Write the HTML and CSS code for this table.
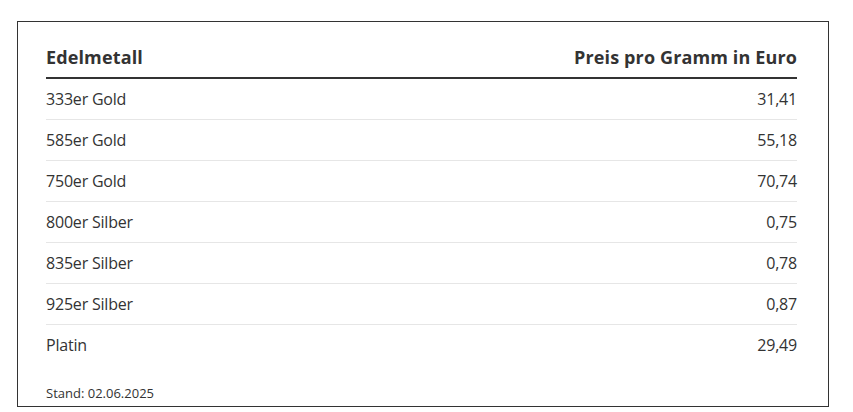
FILE: index.html
```html
<!DOCTYPE html>
<html lang="de">
<head>
<meta charset="utf-8">
<link rel="stylesheet" href="styles.css">
</head>
<body>
<div class="card">
  <table class="prices">
    <thead>
      <tr><th class="name">Edelmetall</th><th class="val">Preis pro Gramm in Euro</th></tr>
    </thead>
    <tbody>
      <tr><td class="name">333er Gold</td><td class="val">31,41</td></tr>
      <tr><td class="name">585er Gold</td><td class="val">55,18</td></tr>
      <tr><td class="name">750er Gold</td><td class="val">70,74</td></tr>
      <tr><td class="name">800er Silber</td><td class="val">0,75</td></tr>
      <tr><td class="name">835er Silber</td><td class="val">0,78</td></tr>
      <tr><td class="name">925er Silber</td><td class="val">0,87</td></tr>
      <tr><td class="name">Platin</td><td class="val">29,49</td></tr>
    </tbody>
  </table>
  <p class="stand">Stand: 02.06.2025</p>
</div>
</body>
</html>
```
FILE: styles.css
```css
html, body { margin: 0; padding: 0; background: #fff; }
body {
  font-family: "Open Sans", "Noto Sans", sans-serif;
  color: #333;
  padding: 21px 24px 0 17px;
}
.card {
  border: 1px solid #333;
  padding: 22px 31px 10px 28px;
  height: 352px;
}
.prices {
  width: 100%;
  border-collapse: collapse;
}
.prices th {
  font-size: 18px;
  font-weight: 700;
  letter-spacing: 0.13px;
  padding: 0 0 7px;
  border-bottom: 2px solid #333;
  line-height: 26px;
}
.prices td {
  font-size: 16px;
  letter-spacing: -0.2px;
  height: 40px;
  padding: 0;
  border-bottom: 1px solid #e6e6e6;
  line-height: 20px;
}
.prices tbody tr:last-child td { border-bottom: none; }
.name { text-align: left; }
.val { text-align: right; }
.stand {
  margin: 20px 0 0;
  font-size: 13px;
  line-height: 16px;
}
```
